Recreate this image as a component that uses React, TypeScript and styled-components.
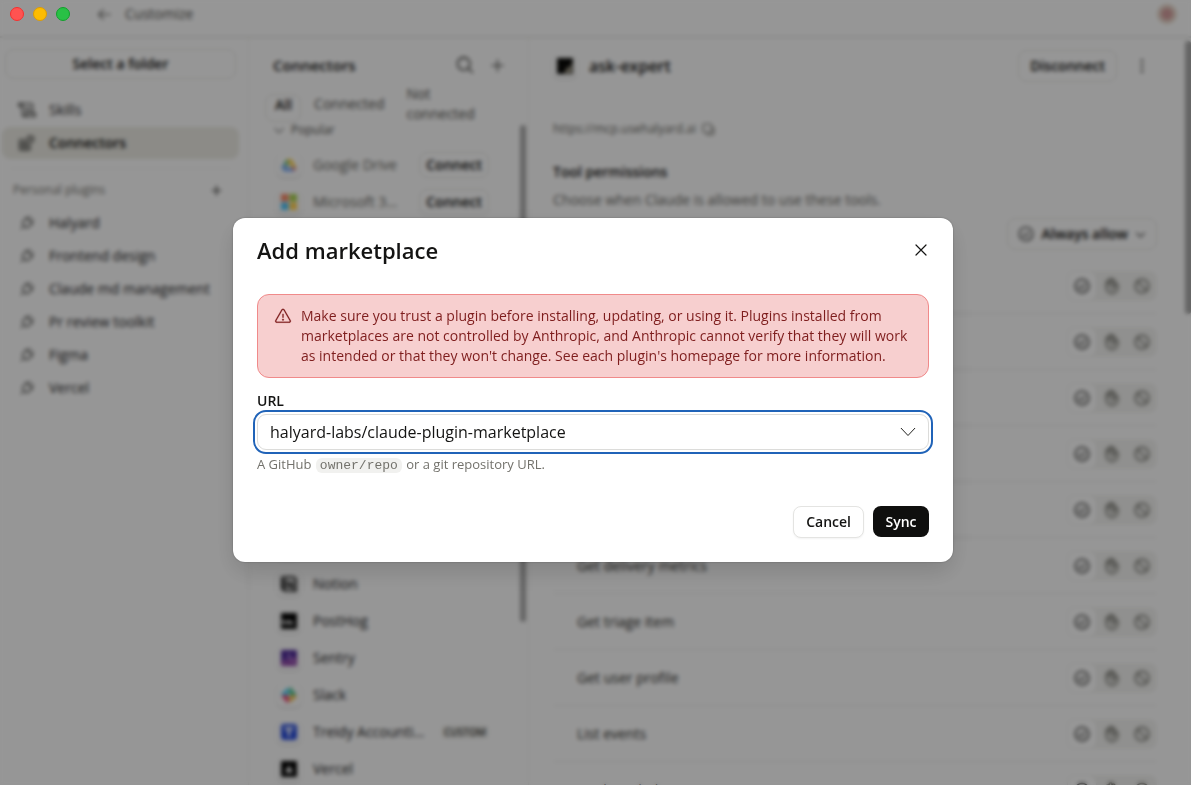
import React from 'react';
import styled, { createGlobalStyle } from 'styled-components';
import {
  PiArrowLeft,
  PiCaretDown,
  PiCheckCircle,
  PiDotsThreeVerticalBold,
  PiHandPalm,
  PiMagnifyingGlass,
  PiPlug,
  PiPlus,
  PiPlusBold,
  PiProhibit,
  PiWarning,
} from 'react-icons/pi';

const GlobalStyle = createGlobalStyle`
  *, *::before, *::after { box-sizing: border-box; }
  body {
    margin: 0;
    background: #fbfbfb;
    color: #141413;
    font-family: "Open Sans", "Noto Sans", sans-serif;
    font-size: 14px;
    line-height: 20px;
  }
  button, input { font: inherit; color: inherit; }
  h1, h2, h3, p, ul { margin: 0; padding: 0; }
  ul { list-style: none; }
`;

/* ---------- window ---------- */

const Window = styled.div`
  position: relative;
  height: 100vh;
  min-height: 600px;
  overflow: hidden;
  display: flex;
  flex-direction: column;
`;

const TitleBar = styled.header`
  display: flex;
  align-items: center;
  gap: 12px;
  flex: none;
  height: 38px;
  padding: 0 14px 8px 96px;
  border-bottom: 2px solid #e4e4e2;
  color: #4c4c48;
`;

const BackButton = styled.button`
  display: flex;
  padding: 0;
  border: 0;
  background: none;
`;

const WindowTitle = styled.span`
  flex: 1;
`;

const Avatar = styled.span`
  width: 20px;
  height: 20px;
  border: 4px solid #e3d3c6;
  border-radius: 50%;
  background: #d29c9c;
`;

const TrafficLights = styled.div`
  position: absolute;
  z-index: 20;
  top: 7px;
  left: 10px;
  display: flex;
  gap: 9px;
`;

const Light = styled.span<{ $fill: string; $edge: string }>`
  width: 14px;
  height: 14px;
  border: 1px solid ${(p) => p.$edge};
  border-radius: 50%;
  background: ${(p) => p.$fill};
`;

const Body = styled.div`
  display: flex;
  flex: 1;
  min-height: 0;
`;

/* ---------- sidebar ---------- */

const Sidebar = styled.nav`
  flex: none;
  width: 249px;
  padding: 11px 9px 0 2px;
  border-right: 1px solid #ececea;
`;

const OutlineButton = styled.button<{ $height: number; $pad: number }>`
  display: inline-flex;
  align-items: center;
  justify-content: center;
  gap: 6px;
  flex: none;
  height: ${(p) => p.$height}px;
  padding: 0 ${(p) => p.$pad}px;
  border: 1px solid #e0e0de;
  border-radius: 8px;
  background: #fbfbfb;
  color: #0c0c0b;
  font-weight: 600;
  white-space: nowrap;
`;

const FolderButton = styled(OutlineButton)`
  display: flex;
  width: calc(100% - 6px);
  margin: 0 3px 15px;
`;

const NavList = styled.ul`
  display: grid;
  gap: 1px;
`;

const NavLink = styled.a<{ $active?: boolean }>`
  display: flex;
  align-items: center;
  gap: 13px;
  height: 32px;
  padding: 0 16px;
  border-radius: 8px;
  background: ${(p) => (p.$active ? '#e9e8e1' : 'transparent')};
  color: ${(p) => (p.$active ? '#0c0c0b' : '#22221f')};
  font-weight: ${(p) => (p.$active ? 600 : 400)};
  text-decoration: none;
`;

const NavIcon = styled.span`
  display: flex;
  justify-content: center;
  flex: none;
  width: 18px;
`;

const Divider = styled.hr`
  margin: 9px 8px 11px;
  border: 0;
  border-top: 1px solid #ececea;
`;

const SectionHead = styled.div`
  display: flex;
  align-items: center;
  justify-content: space-between;
  margin-bottom: 7px;
  padding: 0 16px 0 11px;
  color: #73726c;
  font-size: 12px;
`;

const IconButton = styled.button`
  display: flex;
  padding: 0;
  border: 0;
  background: none;
  color: #22221f;
`;

/* ---------- connector list ---------- */

const ListPane = styled.section`
  position: relative;
  flex: none;
  width: 280px;
  padding: 15px 32px 0 24px;
  border-right: 1px solid #ececea;
`;

const PaneHead = styled.div`
  display: flex;
  align-items: center;
  gap: 14px;
  height: 24px;
  margin-right: -10px;
`;

const PaneTitle = styled.h2`
  flex: 1;
  font-size: 15px;
  font-weight: 600;
`;

const Tabs = styled.div`
  display: flex;
  align-items: center;
  gap: 4px;
  height: 40px;
  margin: 7px 0 0 -8px;
`;

const Tab = styled.button<{ $active?: boolean }>`
  padding: ${(p) => (p.$active ? '0 8px 6px 9px' : '0 8px')};
  margin-top: ${(p) => (p.$active ? '7px' : '0')};
  border: 1px solid ${(p) => (p.$active ? '#e0e0de' : 'transparent')};
  border-radius: 8px;
  background: none;
  color: ${(p) => (p.$active ? '#141413' : '#4c4c48')};
  font-weight: ${(p) => (p.$active ? 600 : 400)};
  text-align: left;
`;

const GroupHead = styled.h3`
  display: flex;
  align-items: center;
  gap: 5px;
  height: 20px;
  margin: -4px 0 6px;
  color: #4c4c48;
  font-size: 12px;
  font-weight: 400;
`;

const Group = styled.div`
  & + & { margin-top: 27px; }
`;

const GroupCaret = styled(PiCaretDown)`
  margin-left: -1px;
`;

const ConnectorRow = styled.li<{ $muted?: boolean }>`
  display: flex;
  align-items: center;
  gap: 12px;
  height: 37px;
  padding-left: 4px;
  color: ${(p) => (p.$muted ? '#65645e' : '#22221f')};
  svg { opacity: ${(p) => (p.$muted ? 0.7 : 1)}; }
`;

const Tile = styled.span`
  display: flex;
  align-items: center;
  justify-content: center;
  flex: none;
  width: 24px;
  height: 24px;
  border-radius: 6px;
  background: #fcfcfc;
  box-shadow: 0 1px 3px rgba(0, 0, 0, 0.16);
`;

const ConnectorName = styled.span<{ $muted?: boolean }>`
  min-width: 0;
  max-width: ${(p) => (p.$muted ? 88 : 116)}px;
  overflow: hidden;
  text-overflow: ellipsis;
  white-space: nowrap;
`;

const ConnectButton = styled(OutlineButton)`
  margin-left: auto;
  margin-right: 7px;
`;

const CustomTag = styled.span`
  flex: none;
  padding: 0 3px;
  border-radius: 4px;
  background: #efefed;
  color: #33332f;
  font-size: 10px;
  line-height: 14px;
  font-weight: 600;
`;

const Scrollbar = styled.span<{ $top: number; $height: string; $right: number }>`
  position: absolute;
  top: ${(p) => p.$top}px;
  right: ${(p) => p.$right}px;
  width: 6px;
  height: ${(p) => p.$height};
  border-radius: 3px;
  background: #a8a8a8;
`;

/* ---------- connector detail ---------- */

const Detail = styled.main`
  position: relative;
  flex: 1;
  min-width: 0;
  padding: 12px 34px 0 24px;
  overflow: hidden;
`;

const DetailHead = styled.div`
  display: flex;
  align-items: center;
  gap: 12px;
  height: 32px;
`;

const DetailTitle = styled.h1`
  flex: 1;
  font-size: 16px;
  font-weight: 600;
`;

const MenuButton = styled(IconButton)`
  padding: 0 5px 0 3px;
`;

const Endpoint = styled.p`
  display: flex;
  align-items: center;
  gap: 6px;
  margin-top: 37px;
  color: #65645e;
  font-size: 12px;
`;

const CopyButton = styled(IconButton)`
  color: #65645e;
`;

const SectionTitle = styled.h3`
  margin-top: 23px;
  font-size: 14px;
  font-weight: 600;
`;

const SectionText = styled.p`
  margin: 8px 0;
  color: #65645e;
`;

const DefaultRow = styled.div`
  display: flex;
  justify-content: flex-end;
  margin-bottom: 8px;
`;

const ToolRow = styled.li`
  display: flex;
  align-items: center;
  justify-content: space-between;
  height: 56px;
  padding-left: 24px;
  border-bottom: 1px solid #e4e4e2;
  color: #2a2a27;
  font-weight: 500;
`;

const Segments = styled.div`
  display: flex;
  border-radius: 8px;
  background: #f0f0ee;
`;

const Segment = styled.button<{ $active?: boolean }>`
  display: flex;
  align-items: center;
  justify-content: center;
  width: 30px;
  height: 30px;
  padding: 0;
  border: 1px solid ${(p) => (p.$active ? '#e8e8e6' : 'transparent')};
  border-radius: 8px;
  background: ${(p) => (p.$active ? '#fdfdfd' : 'transparent')};
  color: ${(p) => (p.$active ? '#22221f' : '#5a5a52')};
  svg { stroke: currentColor; stroke-width: 4; }
`;

/* ---------- dialog ---------- */

const Overlay = styled.div`
  position: absolute;
  z-index: 10;
  inset: 0;
  display: flex;
  align-items: center;
  justify-content: center;
  padding: 0 5px 5px 0;
  background: rgba(0, 0, 0, 0.4);
  backdrop-filter: blur(2px);
`;

const Dialog = styled.div`
  width: 720px;
  max-width: 92%;
  padding: 18px 24px 24px;
  border-radius: 12px;
  background: #fff;
  box-shadow: 0 10px 24px rgba(0, 0, 0, 0.14), 0 0 2px rgba(0, 0, 0, 0.3);
`;

const DialogHead = styled.div`
  display: flex;
  align-items: center;
  justify-content: space-between;
  margin-bottom: 30px;
`;

const DialogTitle = styled.h2`
  font-size: 22px;
  line-height: 28px;
  font-weight: 600;
`;

const CloseButton = styled.button`
  display: flex;
  padding: 2px;
  border: 0;
  background: none;
`;

const Alert = styled.div`
  display: flex;
  gap: 9px;
  margin-bottom: 14px;
  padding: 11px 16px;
  border: 1px solid #f08a8a;
  border-radius: 12px;
  background: #f7cfcf;
  color: #7e1d1d;
  svg { flex: none; margin-top: 1px; stroke: currentColor; stroke-width: 3; }
`;

const FieldLabel = styled.label`
  display: block;
  margin-bottom: 4px;
  line-height: 18px;
  font-weight: 600;
`;

const Combo = styled.div`
  display: flex;
  align-items: center;
  height: 36px;
  padding: 0 12px;
  border: 1px solid #dcdcda;
  border-radius: 9px;
  outline: 2px solid #2063b8;
  outline-offset: 2px;
`;

const ComboInput = styled.input`
  flex: 1;
  min-width: 0;
  padding: 0;
  border: 0;
  outline: 0;
  background: none;
  font-size: 16px;
  line-height: 24px;
`;

const Hint = styled.p`
  margin-top: 4px;
  color: #73726c;
  font-size: 13px;
`;

const Code = styled.code`
  margin: 0 1px;
  padding: 0 4px;
  border-radius: 6px;
  background: #f1f1ef;
  font-family: "Liberation Mono", monospace;
  font-size: 13px;
  line-height: 16px;
`;

const Actions = styled.div`
  display: flex;
  justify-content: flex-end;
  gap: 9px;
  margin-top: 32px;
`;

const ActionButton = styled.button<{ $primary?: boolean }>`
  min-width: 56px;
  height: ${(p) => (p.$primary ? 31 : 32)}px;
  padding: 0 12px;
  border: ${(p) => (p.$primary ? '0' : '1px solid #e4e4e2')};
  border-radius: 8px;
  background: ${(p) => (p.$primary ? '#0f0f0e' : '#fff')};
  color: ${(p) => (p.$primary ? '#fff' : '#141413')};
  box-shadow: ${(p) => (p.$primary ? 'none' : '0 1px 2px rgba(0, 0, 0, 0.05)')};
  font-weight: 600;
`;

/* ---------- drawings ---------- */

const SkillsIcon = () => (
  <svg width="18" height="18" viewBox="0 0 18 18" fill="none" stroke="currentColor" strokeWidth="1.2" strokeLinecap="round" strokeLinejoin="round">
    <path d="M4.500 5.500H1.500a1.500 1.500 0 0 1 1.500-3h10a1.500 1.500 0 0 1 1.500 1.500v8" />
    <path d="M3 2.500a1.500 1.500 0 0 1 1.500 1.500v9.500A2 2 0 0 0 6.500 15.500H15a1.700 1.700 0 0 0 1.500-3.300H8v1.300a2 2 0 0 1-2 2" />
    <path d="M7.500 6.500h4M7.500 9.300h4" />
  </svg>
);

const ConnectorsIcon = () => (
  <svg width="16" height="16" viewBox="0 0 16 16" fill="none" stroke="currentColor" strokeWidth="1.200">
    <path d="M1 5h4.800v4.800H1zM1 9.800h4.800v4.800H1zM5.800 9.800h4.800v4.800H5.800z" />
    <rect x="9" y="1.500" width="5.200" height="5.200" rx="1" transform="rotate(12 11.600 4)" />
  </svg>
);

const CopyIcon = () => (
  <svg width="13" height="13" viewBox="0 0 13 13" fill="none" stroke="currentColor" strokeWidth="1.1" strokeLinejoin="round">
    <rect x="1" y="1" width="8.500" height="8.500" rx="1.500" />
    <path d="M11.800 4v6.300a1.500 1.500 0 0 1-1.500 1.500H4" />
  </svg>
);

const CrossIcon = () => (
  <svg width="12" height="12" viewBox="0 0 12 12" fill="none" stroke="currentColor" strokeWidth="1.2" strokeLinecap="round">
    <path d="M1 1l10 10M11 1L1 11" />
  </svg>
);

const ChevronIcon = () => (
  <svg width="16" height="10" viewBox="0 0 16 10" fill="none" stroke="currentColor" strokeLinecap="round" strokeLinejoin="round">
    <path d="M1.200 1.300L8 8.500l6.800-7.200" />
  </svg>
);

type LogoName = 'drive' | 'microsoft' | 'notion' | 'posthog' | 'sentry' | 'slack' | 'treidy' | 'vercel' | 'expert';

const logoShapes: Record<LogoName, React.ReactNode> = {
  drive: (
    <>
      <path d="M5.500 2h5l5 8.500h-5z" fill="#fbbc04" />
      <path d="M5.500 2L.5 10.500 3 14.500 8 6z" fill="#34a853" />
      <path d="M3 14.500l2.500-4h10l-2.500 4z" fill="#4285f4" />
      <path d="M10.500 10.500h5l-2.500 4z" fill="#ea4335" />
      <path d="M.5 10.500l2.500 4 2.500-4L3 6.500z" fill="#4285f4" />
    </>
  ),
  microsoft: (
    <>
      <path d="M0 0h7.500v7.500H0z" fill="#f25022" />
      <path d="M8.500 0H16v7.500H8.500z" fill="#7fba00" />
      <path d="M0 8.500h7.500V16H0z" fill="#00a4ef" />
      <path d="M8.500 8.500H16V16H8.500z" fill="#ffb900" />
    </>
  ),
  notion: (
    <>
      <path d="M1 1.500L12 .5l3 2.500v12l-11 .5-3-3z" fill="#ddd" stroke="#222" strokeWidth="2" />
      <path d="M0 1.500l4 2.500v12l-4-3.500z" fill="#222" />
      <path d="M6.500 12.500V6l5 6V5.500" fill="none" stroke="#222" strokeWidth="2" />
    </>
  ),
  posthog: (
    <>
      <path d="M0 0h16v16H0z" fill="#050505" />
      <path d="M1.500 11V6l5 5V6.500l5 3 2.500 1.500z" fill="#fff" />
    </>
  ),
  sentry: (
    <>
      <rect width="16" height="16" rx="1" fill="#4c2894" />
      <path d="M0 11l16-4v9H0z" fill="#83399c" />
      <path d="M3 12.500h2.500c0-2-1-3-2-3.500M8 3.500l5 9h-2.500c0-3.500-2-5.500-4.500-6z" fill="none" stroke="#c9a8e6" />
    </>
  ),
  slack: (
    <g strokeWidth="3" strokeLinecap="round">
      <path d="M6 2.500v4M2 6.500h4" stroke="#36c5f0" />
      <path d="M10 2v4.500h3.500" stroke="#2eb67d" fill="none" />
      <path d="M10 10v3.500M10 10h4" stroke="#ecb22e" />
      <path d="M6 10v4M2.500 10H6" stroke="#e01e5a" />
    </g>
  ),
  treidy: (
    <>
      <rect width="16" height="16" rx="3" fill="#2448d8" />
      <path d="M3.500 4.500h9M8 4.500v8" stroke="#fff" strokeWidth="2.500" />
    </>
  ),
  vercel: (
    <>
      <path d="M0 0h16v16H0z" fill="#050505" />
      <path d="M8 4.500l4 7H4z" fill="#fff" />
    </>
  ),
  expert: (
    <>
      <path d="M0 0h16v16H0z" fill="#0a0a08" />
      <path d="M15 4v11H7l3-5 3-1z" fill="#a39d8c" />
    </>
  ),
};

const Logo = ({ name }: { name: LogoName }) => (
  <svg width="16" height="16" viewBox="0 0 16 16" aria-hidden="true">
    {logoShapes[name]}
  </svg>
);

/* ---------- data ---------- */

const plugins = ['Halyard', 'Frontend design', 'Claude md management', 'Pr review toolkit', 'Figma', 'Vercel'];

type Connector = { name: string; logo: LogoName; custom?: boolean };

const popular: Connector[] = [
  { name: 'Google Drive', logo: 'drive' },
  { name: 'Microsoft 365', logo: 'microsoft' },
  { name: 'Notion', logo: 'notion' },
  { name: 'Slack', logo: 'slack' },
  { name: 'Sentry', logo: 'sentry' },
  { name: 'PostHog', logo: 'posthog' },
];

const connected: Connector[] = [
  { name: 'ask-expert', logo: 'expert', custom: true },
  { name: 'Google Drive', logo: 'drive' },
  { name: 'Halyard', logo: 'expert', custom: true },
  { name: 'Microsoft', logo: 'microsoft' },
  { name: 'Notion', logo: 'notion' },
  { name: 'PostHog', logo: 'posthog' },
  { name: 'Sentry', logo: 'sentry' },
  { name: 'Slack', logo: 'slack' },
  { name: 'Treidy Accounting', logo: 'treidy', custom: true },
  { name: 'Vercel', logo: 'vercel' },
];

const tools = [
  'Ask expert',
  'Create event',
  'Create triage item',
  'Get account',
  'Get campaign',
  'Get delivery metrics',
  'Get triage item',
  'Get user profile',
  'List events',
  'List knowledge',
];

export default function App() {
  return (
    <Window>
      <GlobalStyle />
      <TitleBar>
        <BackButton aria-label="Back"><PiArrowLeft size={17} /></BackButton>
        <WindowTitle>Customize</WindowTitle>
        <Avatar />
      </TitleBar>
      <Body>
        <Sidebar>
          <FolderButton $height={30} $pad={12}>Select a folder</FolderButton>
          <NavList>
            <li><NavLink href="#skills"><NavIcon><SkillsIcon /></NavIcon>Skills</NavLink></li>
            <li><NavLink href="#connectors" $active><NavIcon><ConnectorsIcon /></NavIcon>Connectors</NavLink></li>
          </NavList>
          <Divider />
          <SectionHead>
            Personal plugins
            <IconButton aria-label="Add plugin"><PiPlusBold size={13} /></IconButton>
          </SectionHead>
          <NavList>
            {plugins.map((name) => (
              <li key={name}><NavLink href="#plugin"><NavIcon><PiPlug size={16} /></NavIcon>{name}</NavLink></li>
            ))}
          </NavList>
        </Sidebar>

        <ListPane>
          <PaneHead>
            <PaneTitle>Connectors</PaneTitle>
            <IconButton aria-label="Search"><PiMagnifyingGlass size={20} /></IconButton>
            <IconButton aria-label="Add connector"><PiPlus size={17} /></IconButton>
          </PaneHead>
          <Tabs>
            <Tab $active>All</Tab>
            <Tab>Connected</Tab>
            <Tab>Not connected</Tab>
          </Tabs>
          <Group>
            <GroupHead><GroupCaret size={14} />Popular</GroupHead>
            <ul>
              {popular.map((c) => (
                <ConnectorRow key={c.name} $muted>
                  <Tile><Logo name={c.logo} /></Tile>
                  <ConnectorName $muted>{c.name}</ConnectorName>
                  <ConnectButton $height={26} $pad={6}>Connect</ConnectButton>
                </ConnectorRow>
              ))}
            </ul>
          </Group>
          <Group>
            <GroupHead><GroupCaret size={14} />Connected</GroupHead>
            <ul>
              {connected.map((c) => (
                <ConnectorRow key={c.name}>
                  <Tile><Logo name={c.logo} /></Tile>
                  <ConnectorName>{c.name}</ConnectorName>
                  {c.custom && <CustomTag>CUSTOM</CustomTag>}
                </ConnectorRow>
              ))}
            </ul>
          </Group>
          <Scrollbar $top={87} $height="497px" $right={2} />
        </ListPane>

        <Detail>
          <DetailHead>
            <Tile><Logo name="expert" /></Tile>
            <DetailTitle>ask-expert</DetailTitle>
            <OutlineButton $height={32} $pad={11}>Disconnect</OutlineButton>
            <MenuButton aria-label="More options"><PiDotsThreeVerticalBold size={20} /></MenuButton>
          </DetailHead>
          <Endpoint>
            https://mcp.usehalyard.ai
            <CopyButton aria-label="Copy address"><CopyIcon /></CopyButton>
          </Endpoint>
          <SectionTitle>Tool permissions</SectionTitle>
          <SectionText>Choose when Claude is allowed to use these tools.</SectionText>
          <DefaultRow>
            <OutlineButton $height={32} $pad={9}>
              <PiCheckCircle size={18} />
              Always allow
              <PiCaretDown size={13} />
            </OutlineButton>
          </DefaultRow>
          <ul>
            {tools.map((name) => (
              <ToolRow key={name}>
                {name}
                <Segments>
                  <Segment $active aria-label="Always allow"><PiCheckCircle size={18} /></Segment>
                  <Segment aria-label="Ask first"><PiHandPalm size={18} /></Segment>
                  <Segment aria-label="Block"><PiProhibit size={18} /></Segment>
                </Segments>
              </ToolRow>
            ))}
          </ul>
          <Scrollbar $top={3} $height="273px" $right={0} />
        </Detail>
      </Body>

      <Overlay>
        <Dialog role="dialog" aria-modal="true" aria-labelledby="dialog-title">
          <DialogHead>
            <DialogTitle id="dialog-title">Add marketplace</DialogTitle>
            <CloseButton aria-label="Close"><CrossIcon /></CloseButton>
          </DialogHead>
          <Alert role="alert">
            <PiWarning size={18} />
            <p>
              Make sure you trust a plugin before installing, updating, or using it. Plugins installed from
              marketplaces are not controlled by Anthropic, and Anthropic cannot verify that they will work as
              intended or that they won't change. See each plugin's homepage for more information.
            </p>
          </Alert>
          <FieldLabel htmlFor="marketplace-url">URL</FieldLabel>
          <Combo>
            <ComboInput id="marketplace-url" type="text" defaultValue="halyard-labs/claude-plugin-marketplace" />
            <IconButton aria-label="Show suggestions"><ChevronIcon /></IconButton>
          </Combo>
          <Hint>A GitHub <Code>owner/repo</Code> or a git repository URL.</Hint>
          <Actions>
            <ActionButton>Cancel</ActionButton>
            <ActionButton $primary>Sync</ActionButton>
          </Actions>
        </Dialog>
      </Overlay>

      <TrafficLights>
        <Light $fill="#ff5351" $edge="#f5302e" />
        <Light $fill="#fdbc02" $edge="#dc9c04" />
        <Light $fill="#29c146" $edge="#12a02c" />
      </TrafficLights>
    </Window>
  );
}
